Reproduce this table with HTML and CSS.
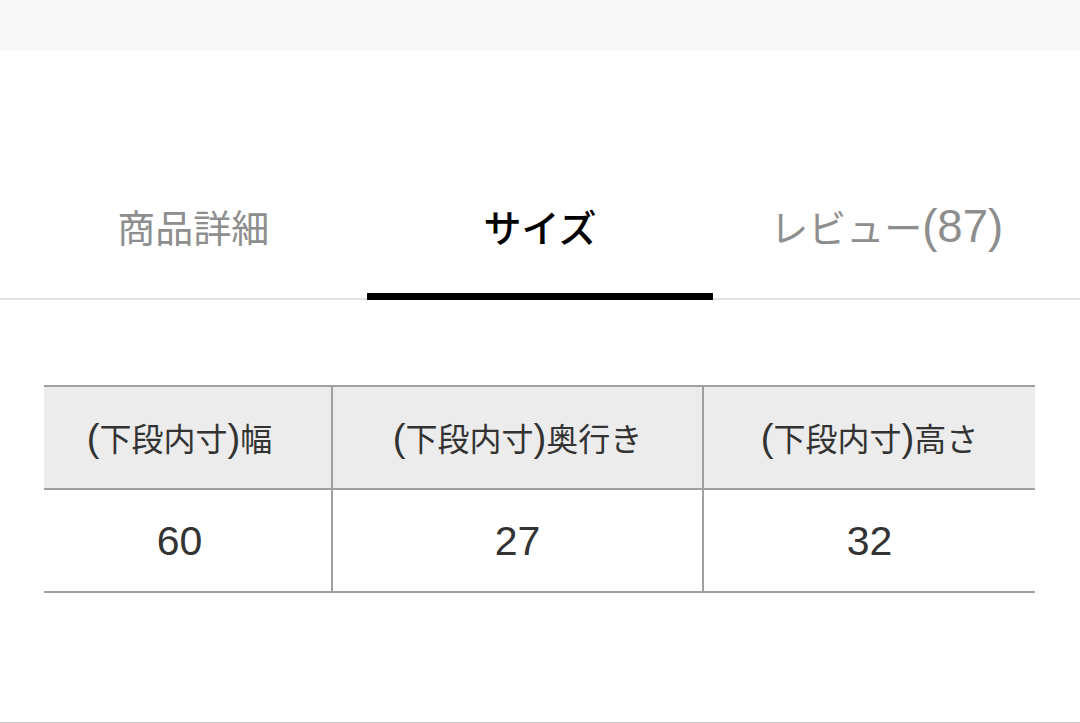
FILE: index.html
```html
<!DOCTYPE html>
<html lang="ja">
<head>
<meta charset="utf-8">
<link rel="stylesheet" href="styles.css">
</head>
<body>
<div class="topband"></div>
<nav class="tabs">
  <div class="tabs-inner">
    <div class="tab">商品詳細</div>
    <div class="tab active">サイズ</div>
    <div class="tab">レビュー<span class="lat">(87)</span></div>
  </div>
</nav>
<section class="sizes">
  <table class="size-table">
    <colgroup>
      <col class="c1"><col class="c2"><col class="c3">
    </colgroup>
    <thead>
      <tr>
        <th><span class="lat">(</span>下段内寸<span class="lat">)</span>幅</th>
        <th><span class="lat">(</span>下段内寸<span class="lat">)</span>奥行き</th>
        <th><span class="lat">(</span>下段内寸<span class="lat">)</span>高さ</th>
      </tr>
    </thead>
    <tbody>
      <tr><td>60</td><td>27</td><td>32</td></tr>
    </tbody>
  </table>
</section>
<div class="next-line"></div>
</body>
</html>
```

FILE: styles.css
```css
html, body {
  margin: 0;
  padding: 0;
  background: #ffffff;
  height: 723px;
  overflow: hidden;
}
body {
  font-family: "Noto Sans CJK JP", "Noto Sans", sans-serif;
  color: #333;
  position: relative;
}
.lat {
  font-family: "Liberation Sans", Arial, sans-serif;
  font-size: 1.2em;
  line-height: 1;
}
.topband {
  height: 51px;
  background: #f8f8f8;
}
.tabs {
  border-bottom: 2px solid #e2e2e2;
}
.tabs-inner {
  display: flex;
  padding: 0 20px;
}
.tab {
  flex: 1 1 0;
  text-align: center;
  font-size: 38px;
  line-height: 50px;
  color: #8e8e8e;
  padding: 150px 0 42px;
  border-bottom: 7px solid transparent;
  margin-bottom: -2px;
}
.tab.active {
  color: #000;
  font-weight: 500;
  border-bottom-color: #000;
}
.sizes {
  padding: 85px 45px 0 44px;
}
.size-table {
  width: 991px;
  table-layout: fixed;
  border-collapse: collapse;
  font-size: 32px;
  color: #333;
}
.size-table .c1 { width: 288px; }
.size-table .c2 { width: 371px; }
.size-table .c3 { width: 332px; }
.size-table th, .size-table td {
  border: 2px solid #a0a0a0;
  text-align: center;
  font-weight: 400;
  height: 101px;
  padding: 0;
  line-height: 40px;
}
.size-table th:first-child, .size-table td:first-child {
  border-left: none;
  padding-right: 16px;
}
.size-table th:last-child, .size-table td:last-child { border-right: none; }
.size-table th { background: #ececec; }
.size-table td {
  font-family: "Liberation Sans", Arial, sans-serif;
  font-size: 41px;
}
.next-line {
  position: absolute;
  left: 0;
  right: 0;
  bottom: 0;
  height: 1px;
  background: #c4c4c4;
}
```
